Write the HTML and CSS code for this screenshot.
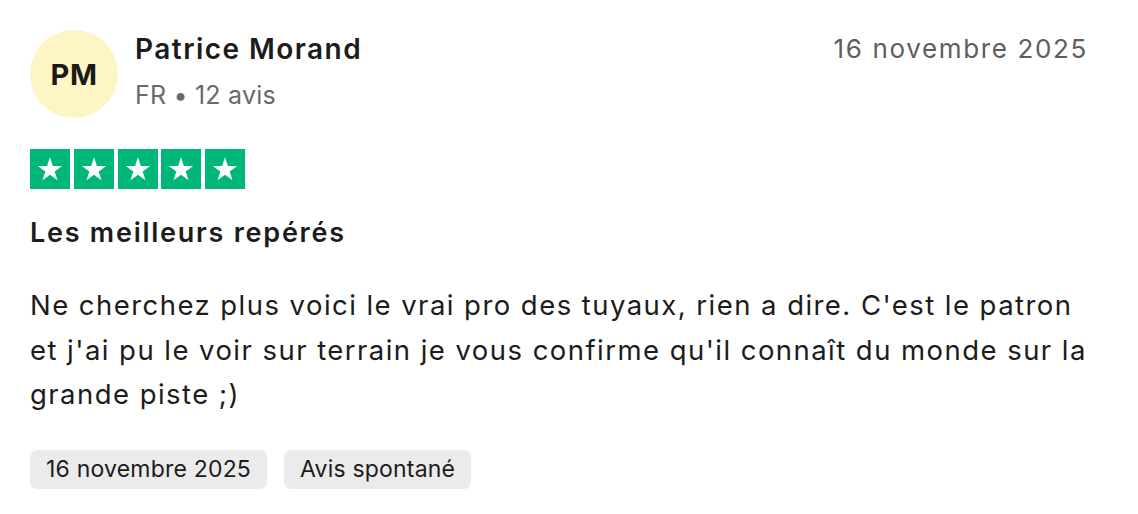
FILE: index.html
```html
<!DOCTYPE html>
<html lang="fr">
<head>
<meta charset="utf-8">
<link rel="stylesheet" href="styles.css">
</head>
<body>
<article class="review">
  <header class="head">
    <div class="avatar">PM</div>
    <div class="who">
      <div class="name">Patrice Morand</div>
      <div class="meta">FR • 12 avis</div>
    </div>
    <time class="date">16 novembre 2025</time>
  </header>
  <div class="stars">
    <span class="star"><svg viewBox="0 0 24 24"><path d="M12 3.2l2.2 6.6h6.9l-5.6 4.1 2.1 6.6L12 16.4l-5.6 4.1 2.1-6.6-5.6-4.1h6.9z" fill="#fff"/></svg></span>
    <span class="star"><svg viewBox="0 0 24 24"><path d="M12 3.2l2.2 6.6h6.9l-5.6 4.1 2.1 6.6L12 16.4l-5.6 4.1 2.1-6.6-5.6-4.1h6.9z" fill="#fff"/></svg></span>
    <span class="star"><svg viewBox="0 0 24 24"><path d="M12 3.2l2.2 6.6h6.9l-5.6 4.1 2.1 6.6L12 16.4l-5.6 4.1 2.1-6.6-5.6-4.1h6.9z" fill="#fff"/></svg></span>
    <span class="star"><svg viewBox="0 0 24 24"><path d="M12 3.2l2.2 6.6h6.9l-5.6 4.1 2.1 6.6L12 16.4l-5.6 4.1 2.1-6.6-5.6-4.1h6.9z" fill="#fff"/></svg></span>
    <span class="star"><svg viewBox="0 0 24 24"><path d="M12 3.2l2.2 6.6h6.9l-5.6 4.1 2.1 6.6L12 16.4l-5.6 4.1 2.1-6.6-5.6-4.1h6.9z" fill="#fff"/></svg></span>
  </div>
  <h2 class="title">Les meilleurs repérés</h2>
  <p class="body">Ne cherchez plus voici le vrai pro des tuyaux, rien a dire. C'est le patron et j'ai pu le voir sur terrain je vous confirme qu'il connaît du monde sur la grande piste ;)</p>
  <div class="tags">
    <span class="tag">16 novembre 2025</span>
    <span class="tag">Avis spontané</span>
  </div>
</article>
</body>
</html>
```

FILE: styles.css
```css
html, body {
  margin: 0;
  padding: 0;
  background: #ffffff;
}
body {
  font-family: Inter, "Noto Sans", sans-serif;
  color: #1c1c1c;
}
.review {
  padding: 30px 50px 0 30px;
}
.head {
  display: flex;
  align-items: flex-start;
}
.avatar {
  width: 88px;
  height: 88px;
  border-radius: 50%;
  background: #fdf5c4;
  display: flex;
  align-items: center;
  justify-content: center;
  font-size: 29px;
  font-weight: 700;
  letter-spacing: 0.5px;
  color: #1a1a1a;
  flex-shrink: 0;
}
.who {
  margin-left: 17px;
  flex: 1;
  padding-top: 1px;
}
.name {
  font-size: 28px;
  font-weight: 600;
  line-height: 36px;
  letter-spacing: 1.45px;
  color: #1c1c1c;
}
.meta {
  font-size: 25px;
  line-height: 32px;
  margin-top: 12px;
  letter-spacing: 0.2px;
  color: #6a6a6a;
}
.date {
  font-size: 26px;
  line-height: 36px;
  padding-top: 1px;
  color: #5e5e5e;
  letter-spacing: 1.65px;
}
.stars {
  display: flex;
  gap: 3.8px;
  margin-top: 31px;
}
.star {
  width: 40px;
  height: 40px;
  background: #00b67a;
  display: flex;
  align-items: center;
  justify-content: center;
}
.star svg {
  width: 32px;
  height: 32px;
}
.title {
  margin: 24px 0 0 0;
  font-size: 27px;
  line-height: 40px;
  font-weight: 600;
  letter-spacing: 1.75px;
  color: #1c1c1c;
}
.body {
  margin: 30px 0 0 0;
  font-size: 27.5px;
  line-height: 44.5px;
  letter-spacing: 1.45px;
  color: #1c1c1c;
}
.tags {
  display: flex;
  gap: 17px;
  margin-top: 33px;
}
.tag {
  background: #ebebeb;
  border-radius: 7px;
  height: 39px;
  padding: 0 16px;
  display: flex;
  align-items: center;
  font-size: 23px;
  letter-spacing: 0.2px;
  color: #1c1c1c;
}
```
